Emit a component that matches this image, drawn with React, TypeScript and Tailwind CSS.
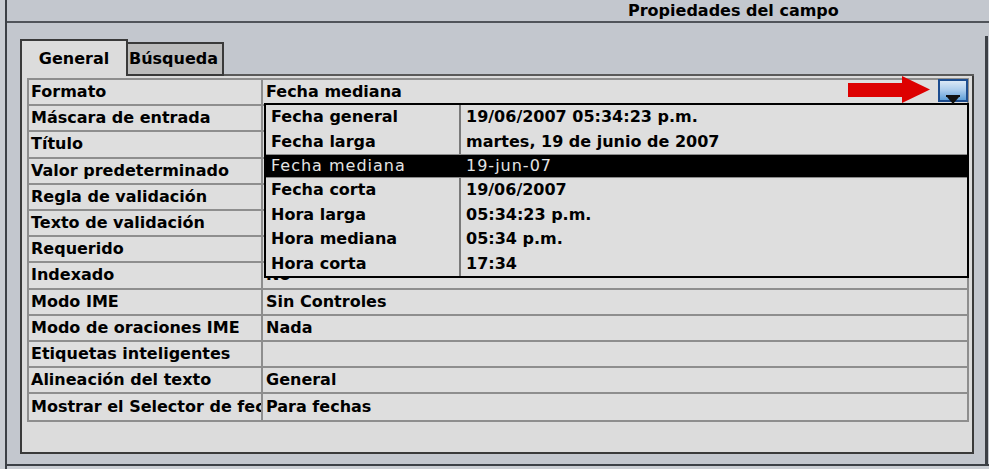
const rows: [string, string][] = [
  ["Formato", "Fecha mediana"],
  ["Máscara de entrada", ""],
  ["Título", ""],
  ["Valor predeterminado", ""],
  ["Regla de validación", ""],
  ["Texto de validación", ""],
  ["Requerido", ""],
  ["Indexado", "No"],
  ["Modo IME", "Sin Controles"],
  ["Modo de oraciones IME", "Nada"],
  ["Etiquetas inteligentes", ""],
  ["Alineación del texto", "General"],
  ["Mostrar el Selector de fecha", "Para fechas"],
];

const formats: [string, string][] = [
  ["Fecha general", "19/06/2007 05:34:23 p.m."],
  ["Fecha larga", "martes, 19 de junio de 2007"],
  ["Fecha mediana", "19-jun-07"],
  ["Fecha corta", "19/06/2007"],
  ["Hora larga", "05:34:23 p.m."],
  ["Hora mediana", "05:34 p.m."],
  ["Hora corta", "17:34"],
];

function FormatList() {
  return (
    <div className="absolute left-[264px] top-[103px] w-[705px] h-[175px] border-2 border-black bg-[#dedede]">
      {formats.map(([name, sample]) => {
        const selected = name === "Fecha mediana";
        return (
          <div
            key={name}
            className={
              selected
                ? "flex h-[24.4px] bg-black text-[#e4e4e4] font-normal tracking-[1px] border-y border-[#8a8a8a]"
                : "flex h-[24.4px]"
            }
          >
            <div
              className={
                selected
                  ? "w-[195px] flex items-center pl-[5px]"
                  : "w-[195px] flex items-center pl-[5px] border-r-2 border-[#7a7a7a]"
              }
            >
              {name}
            </div>
            <div className="flex-1 flex items-center pl-[5px]">{sample}</div>
          </div>
        );
      })}
    </div>
  );
}

function DropButton() {
  return (
    <div className="absolute left-[938px] top-[79px] w-[30px] h-[23px] border-2 border-[#1d4d8f] bg-gradient-to-b from-[#dbe8f5] via-[#a9cbec] to-[#5e9fd8]">
      <svg className="absolute left-[6px] bottom-[-4px]" width="14" height="9" viewBox="0 0 14 9">
        <rect x="0" y="0" width="14" height="2" fill="#111" />
        <polygon points="1,2 13,2 7,9" fill="#111" />
      </svg>
    </div>
  );
}

function RedArrow() {
  return (
    <svg className="absolute left-[848px] top-[76px]" width="82" height="27" viewBox="0 0 82 27">
      <rect x="0" y="7" width="56" height="14" fill="#dd0000" />
      <polygon points="54,0 82,13.5 54,27" fill="#dd0000" />
    </svg>
  );
}

export default function App() {
  return (
    <div className="relative w-[989px] h-[469px] overflow-hidden bg-[#c3c7ce] flex font-['DejaVu_Sans',sans-serif] text-[16px] font-bold text-black">
      <div className="w-[5px] bg-[#c9cdd3]" />
      <div className="w-[2px] bg-[#3c4046]" />
      <div className="flex-1 flex flex-col">
        <div className="h-[23px] border-b-2 border-[#50545a] flex items-center pl-[621px]">
          Propiedades del campo
        </div>

        <div className="flex-1 flex">
          <div className="w-[13px]" />
          <div className="w-[954px] flex flex-col pt-[16px]">
            <div className="h-[37px] flex items-end">
              <div className="w-[108px] h-[37px] border-l-2 border-t-2 border-r-2 border-[#3a3a3a] bg-[#dcdcdc] flex items-center justify-center">
                General
              </div>
              <div className="w-[96px] h-[34px] border-t-2 border-r-2 border-b-2 border-[#3a3a3a] bg-[#bcbcbc] flex items-center pl-[1px]">
                Búsqueda
              </div>
              <div className="flex-1 h-[2px] bg-[#5a5a5a]" />
            </div>
            <div className="h-[378px] border-l-2 border-r-2 border-b-2 border-[#3a3a3a] bg-[#dcdcdc] pt-[2px] pl-[5px]">
              <div className="w-[942px] border-2 border-[#8e8e8e] bg-[#dedede] divide-y-2 divide-[#8e8e8e]">
                {rows.map(([label, value]) => (
                  <div key={label} className="flex h-[26.2px]">
                    <div className="w-[234px] border-r-2 border-[#8e8e8e] flex items-center pl-[2px] overflow-hidden whitespace-nowrap">
                      {label}
                    </div>
                    <div className="flex-1 flex items-center pl-[3px] whitespace-nowrap">{value}</div>
                  </div>
                ))}
              </div>
            </div>
          </div>
          <div className="w-[11px]" />
          <div className="w-[3px] mt-[13px] bg-[#3c4046]" />
          <div className="w-[1px]" />
        </div>

        <div className="h-[2px] bg-[#3c4046]" />
        <div className="h-[3px] bg-[#c9cdd3]" />
      </div>

      <FormatList />
      <RedArrow />
      <DropButton />
    </div>
  );
}
